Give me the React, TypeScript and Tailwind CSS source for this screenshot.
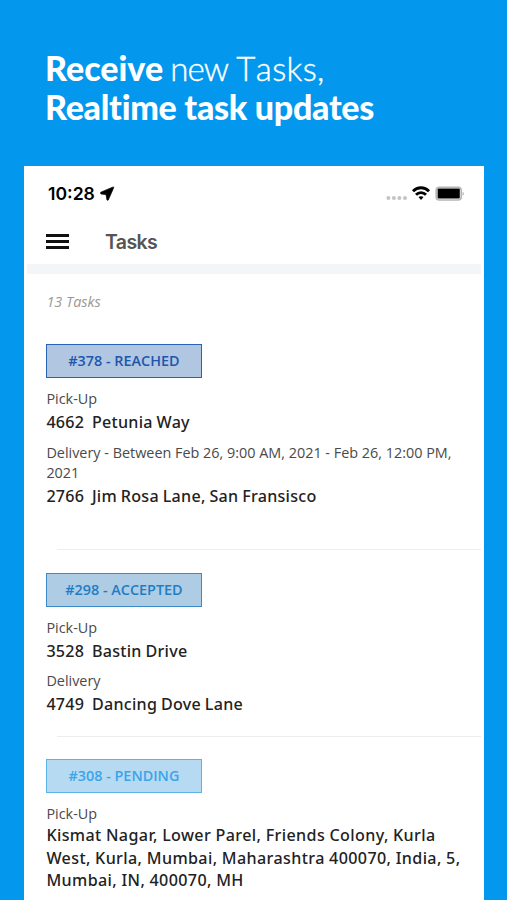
interface StopProps {
  label: string;
  address: string;
  className?: string;
  addressClass?: string;
}

function Stop({ label, address, className = '', addressClass = '' }: StopProps) {
  return (
    <div className={className}>
      <p className="w-[425px] text-[14.4px] leading-5 text-[#4a4a4a]">{label}</p>
      <p
        className={`whitespace-pre-wrap font-['Noto_Sans',sans-serif] font-medium leading-[22.5px] text-[#222] ${addressClass}`}
      >
        {address}
      </p>
    </div>
  );
}

function Badge({ text, className }: { text: string; className: string }) {
  return (
    <div
      className={`flex h-[34px] w-[156px] items-center justify-center border-[1.5px] pr-px text-[14.4px] font-semibold ${className}`}
    >
      {text}
    </div>
  );
}

function StatusBar() {
  return (
    <div className="flex h-[55px] items-center pl-[24px] pr-[19px]">
      <span className="pt-px font-[Inter,sans-serif] text-[17.6px] font-semibold text-black">10:28</span>
      <svg className="ml-[5px] h-[15px] w-[15px]" viewBox="0 0 15 15">
        <path d="M13.2 0.9 L0.8 6.2 Q0 7.4 1 8 L6 8.6 L6.9 13.8 Q7.6 14.8 8.3 14 L13.8 1.4 Z" fill="#000" stroke="#000" strokeWidth="0.7" strokeLinejoin="round" />
      </svg>
      <svg className="ml-auto h-4 w-[80px]" viewBox="0 0 80 16">
        <g fill="#c4c4c4">
          <circle cx="3.4" cy="12" r="2" />
          <circle cx="8.9" cy="12" r="2" />
          <circle cx="14.4" cy="12" r="2" />
          <circle cx="20" cy="12" r="2" />
        </g>
        <g fill="none" stroke="#000" strokeWidth="2.8">
          <path d="M28 5.2 A11 11 0 0 1 44 5.2" />
          <path d="M31 8.7 A7 7 0 0 1 41 8.7" />
        </g>
        <path d="M33.5 11.1 Q36 9.3 38.5 11.1 L36 13.9 Z" fill="#000" />
        <rect x="51.2" y="1.2" width="25" height="12.8" rx="3" fill="#fff" stroke="#b5b5b5" strokeWidth="1.6" />
        <rect x="52.6" y="2.6" width="22.2" height="10" rx="1" fill="#000" />
        <path d="M77.6 5.7 Q80.2 7.8 77.6 9.9 Z" fill="#a8a8a8" />
      </svg>
    </div>
  );
}

export default function App() {
  return (
    <div className="h-[900px] w-[507px] overflow-hidden bg-[#0397ee]">
      <h1 className="h-[166px] pl-[45px] pt-[49px] font-[Lato,sans-serif] text-[34px] leading-[38.5px] text-white">
        <span className="block whitespace-nowrap font-light">
          <b className="font-black">Receive</b>
          <span className="ml-[7px] text-[33px] tracking-[-0.8px] [-webkit-text-stroke:0.4px_white]">new</span>
          <span className="ml-[8px] text-[33px] tracking-[0.4px] [-webkit-text-stroke:0.4px_white] [font-kerning:none]">Tasks,</span>
        </span>
        <span className="block whitespace-nowrap font-black tracking-[-0.28px]">Realtime task updates</span>
      </h1>

      <div className="ml-[24px] h-[734px] w-[459.5px] bg-white font-['Open_Sans',sans-serif]">
        <StatusBar />
        <div className="flex h-[43px] items-center pb-[2px] pl-[22px]">
          <div className="flex w-[23px] flex-col gap-[3.4px]">
            <span className="h-[3px] bg-[#111]" />
            <span className="h-[3px] bg-[#111]" />
            <span className="h-[3px] bg-[#111]" />
          </div>
          <span className="ml-[36px] pt-[2px] font-[Inter,sans-serif] text-[19.5px] font-semibold tracking-[-0.6px] text-[#555]">Tasks</span>
        </div>
        <div className="mx-[3px] h-[10px] bg-[#f3f5f9]" />

        <div className="pl-[22.4px]">
          <p className="mt-[17.5px] h-5 text-[14.4px] italic leading-5 text-[#999]">13 Tasks</p>

          <section className="mt-[32.5px] h-[205px]">
            <Badge text="#378 - REACHED" className="border-[#2a62b4] bg-[#b0c6e1] text-[#1e56ac]" />
            <Stop
              className="mt-[10.8px]"
              addressClass="mt-[2px] text-[16.1px] tracking-[0.26px] [word-spacing:-0.6px]"
              label="Pick-Up"
              address="4662  Petunia Way"
            />
            <Stop
              className="mt-[9.5px]"
              addressClass="mt-[2px] text-[16.1px] tracking-[0.26px] [word-spacing:-0.6px]"
              label="Delivery - Between Feb 26, 9:00 AM, 2021 - Feb 26, 12:00 PM, 2021"
              address="2766  Jim Rosa Lane, San Fransisco"
            />
          </section>
          <hr className="ml-[11px] mr-[3px] border-[#ededed]" />

          <section className="mt-[22.5px] h-[163.5px]">
            <Badge text="#298 - ACCEPTED" className="border-[#3a8aca] bg-[#aecce3] text-[#1f7dc4]" />
            <Stop
              className="mt-[11px]"
              addressClass="mt-[2.5px] text-[16.1px] tracking-[0.26px] [word-spacing:-0.6px]"
              label="Pick-Up"
              address="3528  Bastin Drive"
            />
            <Stop
              className="mt-[8.5px]"
              addressClass="mt-[1.5px] text-[16.1px] tracking-[0.26px] [word-spacing:-0.6px]"
              label="Delivery"
              address="4749  Dancing Dove Lane"
            />
          </section>
          <hr className="ml-[11px] mr-[3px] border-[#ededed]" />

          <section className="mt-[21.5px]">
            <Badge text="#308 - PENDING" className="border-[#5cb4e6] bg-[#b6daf1] text-[#3ba4ea]" />
            <Stop
              className="mt-[11.5px] w-[420px]"
              addressClass="text-[16.1px] tracking-[0.38px] [word-spacing:-0.2px]"
              label="Pick-Up"
              address="Kismat Nagar, Lower Parel, Friends Colony, Kurla West, Kurla, Mumbai, Maharashtra 400070, India, 5, Mumbai, IN, 400070, MH"
            />
          </section>
        </div>
      </div>
    </div>
  );
}
